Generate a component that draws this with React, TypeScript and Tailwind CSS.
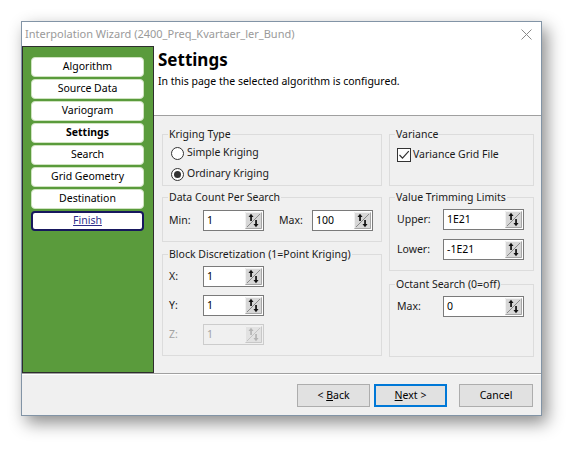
import React from "react";

const FONT = { fontFamily: '"Noto Sans", "Liberation Sans", sans-serif' };

function SpinIcon({ disabled }: { disabled?: boolean }) {
  const c = disabled ? "#b4b4b4" : "#111111";
  return (
    <svg width="17" height="17" viewBox="0 0 17 17" className="block">
      <rect x="0" y="0" width="17" height="17" fill={disabled ? "#e2e2e2" : "#d7d7d7"} />
      <path d="M0.5 16.5 V0.5 H16.5" stroke={disabled ? "#f0f0f0" : "#f2f2f2"} fill="none" />
      <path d="M0.5 16.5 H16.5 V0.5" stroke={disabled ? "#c8c8c8" : "#a6a6a6"} fill="none" />
      <line x1="2" y1="15" x2="15" y2="2" stroke={disabled ? "#c4c4c4" : "#8a8a8a"} strokeWidth="1" />
      <path d="M3.5 5 L6 1.8 L8.5 5 Z" fill={c} />
      <rect x="5.2" y="4" width="1.7" height="5" fill={c} />
      <path d="M8.5 12 L11 15.2 L13.5 12 Z" fill={c} />
      <rect x="10.2" y="8" width="1.7" height="5" fill={c} />
    </svg>
  );
}

function Spin({ value, className, disabled }: { value: string; className: string; disabled?: boolean }) {
  return (
    <div
      className={`flex h-[21px] items-stretch border ${
        disabled ? "border-[#cccccc] bg-[#f0f0f0] text-[#a3a3a3]" : "border-[#7a7a7a] bg-white text-black"
      } ${className}`}
    >
      <span className="flex flex-1 items-center pl-[3px] text-[10.5px]">{value}</span>
      <span className="flex items-center pr-[1px]">
        <SpinIcon disabled={disabled} />
      </span>
    </div>
  );
}

function Radio({ checked, label }: { checked?: boolean; label: string }) {
  return (
    <div className="flex h-[16px] items-center">
      <span className="ml-[8px] flex h-[13px] w-[13px] items-center justify-center rounded-full border border-[#333333] bg-white">
        {checked && <span className="h-[7px] w-[7px] rounded-full bg-[#333333]" />}
      </span>
      <span className="ml-[3px] text-[10.5px]">{label}</span>
    </div>
  );
}

function NavBtn({ label, bold, finish }: { label: string; bold?: boolean; finish?: boolean }) {
  return (
    <div
      className={`flex h-[20px] w-[113px] items-center justify-center rounded-[4px] bg-white text-[10.5px] ${
        finish ? "border-2 border-[#17175e] text-[#2d2d8a] underline" : "border border-[#cfe3c0] text-black"
      } ${bold ? "font-bold" : ""}`}
    >
      {label}
    </div>
  );
}

function Group({ title, className, children }: { title: string; className: string; children?: React.ReactNode }) {
  return (
    <fieldset className={`border border-[#dcdcdc] ${className}`}>
      <legend className="ml-[5px] px-[1px] text-[10.5px] leading-[14px]">{title}</legend>
      {children}
    </fieldset>
  );
}

export default function App() {
  return (
    <div className="h-[458px] w-[585px] bg-white pl-[21px] pt-[21px] text-[#1a1a1a]" style={FONT}>
      <div className="flex h-[395px] w-[521px] flex-col border border-[#8294a6] bg-[#f0f0f0] shadow-[5px_7px_16px_rgba(0,0,0,0.45)]">
        {/* title bar */}
        <div className="flex h-[24px] shrink-0 items-center justify-between bg-white pl-[3px] pr-[9px]">
          <span className="text-[11px] text-[#9a9a9a]">Interpolation Wizard (2400_Preq_Kvartaer_ler_Bund)</span>
          <svg width="11" height="11" viewBox="0 0 11 11">
            <path d="M0.5 0.5 L10.5 10.5 M10.5 0.5 L0.5 10.5" stroke="#8a8a8a" strokeWidth="1" />
          </svg>
        </div>
        {/* body */}
        <div className="flex h-[327px] shrink-0">
          <div className="flex w-[132px] shrink-0 flex-col gap-[2px] border border-[#2e2e2e] bg-[#5a9b3c] pl-[8px] pt-[10px]">
            <NavBtn label="Algorithm" />
            <NavBtn label="Source Data" />
            <NavBtn label="Variogram" />
            <NavBtn label="Settings" bold />
            <NavBtn label="Search" />
            <NavBtn label="Grid Geometry" />
            <NavBtn label="Destination" />
            <NavBtn label="Finish" finish />
          </div>
          <div className="flex flex-1 flex-col">
            <div className="h-[70px] shrink-0 border-b border-[#a0a0a0] bg-white pl-[4px] pt-[3px]">
              <div className="text-[17px] font-bold leading-[22px] text-black">Settings</div>
              <div className="mt-[3px] text-[10.5px] leading-[14px] text-black">
                In this page the selected algorithm is configured.
              </div>
            </div>
            <div className="flex flex-1 gap-[7px] pl-[8px] pt-[11px]">
              {/* left column */}
              <div className="flex w-[220px] flex-col">
                <Group title="Kriging Type" className="h-[59px]">
                  <div className="mt-[4px] flex flex-col gap-[5px]">
                    <Radio label="Simple Kriging" />
                    <Radio label="Ordinary Kriging" checked />
                  </div>
                </Group>
                <Group title="Data Count Per Search" className="mt-[4px] h-[52px]">
                  <div className="mt-[6px] flex items-center">
                    <span className="ml-[6px] w-[34px] text-[10.5px]">Min:</span>
                    <Spin value="1" className="w-[61px]" />
                    <span className="ml-[15px] w-[33px] text-[10.5px]">Max:</span>
                    <Spin value="100" className="w-[61px]" />
                  </div>
                </Group>
                <Group title="Block Discretization (1=Point Kriging)" className="mt-[5px] h-[109px]">
                  <div className="mt-[5px] flex flex-col gap-[8px]">
                    <div className="flex items-center">
                      <span className="ml-[6px] w-[34px] text-[10.5px]">X:</span>
                      <Spin value="1" className="w-[61px]" />
                    </div>
                    <div className="flex items-center">
                      <span className="ml-[6px] w-[34px] text-[10.5px]">Y:</span>
                      <Spin value="1" className="w-[61px]" />
                    </div>
                    <div className="flex items-center">
                      <span className="ml-[6px] w-[34px] text-[10.5px] text-[#a3a3a3]">Z:</span>
                      <Spin value="1" className="w-[61px]" disabled />
                    </div>
                  </div>
                </Group>
              </div>
              {/* right column */}
              <div className="flex w-[145px] flex-col">
                <Group title="Variance" className="h-[59px]">
                  <div className="mt-[6px] flex items-center">
                    <span className="ml-[7px] flex h-[14px] w-[14px] items-center justify-center border border-[#333333] bg-white">
                      <svg width="12" height="12" viewBox="0 0 12 12">
                        <path d="M1.5 6 L4.5 9.2 L10.8 2.2" stroke="#333333" strokeWidth="1.2" fill="none" />
                      </svg>
                    </span>
                    <span className="ml-[2px] text-[10.5px]">Variance Grid File</span>
                  </div>
                </Group>
                <Group title="Value Trimming Limits" className="mt-[4px] h-[81px]">
                  <div className="mt-[5px] flex flex-col gap-[9px]">
                    <div className="flex items-center">
                      <span className="ml-[7px] w-[46px] text-[10.5px]">Upper:</span>
                      <Spin value="1E21" className="w-[81px]" />
                    </div>
                    <div className="flex items-center">
                      <span className="ml-[7px] w-[46px] text-[10.5px]">Lower:</span>
                      <Spin value="-1E21" className="w-[81px]" />
                    </div>
                  </div>
                </Group>
                <Group title="Octant Search (0=off)" className="mt-[6px] h-[80px]">
                  <div className="mt-[5px] flex items-center">
                    <span className="ml-[7px] w-[46px] text-[10.5px]">Max:</span>
                    <Spin value="0" className="w-[81px]" />
                  </div>
                </Group>
              </div>
            </div>
          </div>
        </div>
        {/* footer */}
        <div className="flex flex-1 items-start justify-end border-t border-[#a0a0a0] pr-[8px] pt-[10px] shadow-[inset_0_1px_0_#ffffff]">
          <button className="h-[23px] w-[73px] border border-[#adadad] bg-[#e1e1e1] text-[10.5px] text-black">
            &lt; <span className="underline">B</span>ack
          </button>
          <button className="ml-[4px] h-[23px] w-[73px] border-2 border-[#0078d7] bg-[#e1e1e1] text-[10.5px] text-black">
            <span className="underline">N</span>ext &gt;
          </button>
          <button className="ml-[12px] h-[23px] w-[74px] border border-[#adadad] bg-[#e1e1e1] text-[10.5px] text-black">
            Cancel
          </button>
        </div>
      </div>
    </div>
  );
}
